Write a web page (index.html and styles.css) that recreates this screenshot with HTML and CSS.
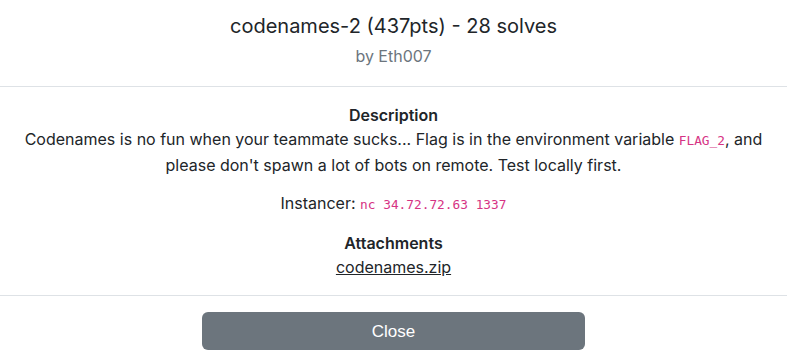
FILE: index.html
```html
<!DOCTYPE html>
<html lang="en">

<head>
    <meta charset="UTF-8">
    <meta name="viewport" content="width=device-width, initial-scale=1.0">
    <title>codenames-2</title>
    <link rel="stylesheet" href="styles.css">
</head>

<body>
    <div id="modal">
        <div id="modal-head">
            <h3 class="title">codenames-2 (437pts) - 28 solves</h3>
            <p class="author">by Eth007</p>
        </div>
        <div id="modal-body">
            <div class="block">
                <h6 class="label">Description</h6>
                <p>Codenames is no fun when your teammate sucks... Flag is in the environment variable <code>FLAG_2</code>, and
                    please don't spawn a lot of bots on remote. Test locally first.</p>
            </div>
            <div class="block">
                <p>Instancer: <code>nc 34.72.72.63 1337</code></p>
            </div>
            <div class="block">
                <h6 class="label">Attachments</h6>
                <a href="#">codenames.zip</a>
            </div>
        </div>
        <div id="modal-footer">
            <button class="btn-close">Close</button>
        </div>
    </div>
</body>

</html>
```

FILE: styles.css
```css
* {
    margin: 0;
    padding: 0;
    box-sizing: border-box;
}

body {
    font-family: Inter, "Noto Sans", sans-serif;
    font-size: 16px;
    line-height: 24px;
    color: #212529;
    background: #fff;
}

#modal {
    width: 787px;
}

#modal-head {
    text-align: center;
    padding: 12px 16px 18px;
    border-bottom: 1px solid #dee2e6;
}

.title {
    font-size: 20px;
    font-weight: 400;
    line-height: 28px;
}

.author {
    font-size: 16px;
    color: #6c757d;
    margin-top: 4px;
}

#modal-body {
    text-align: center;
    padding: 16px 16px 16px;
    border-bottom: 1px solid #dee2e6;
}

.block {
    margin-bottom: 14px;
}

.block:last-child {
    margin-bottom: 0;
}

.label {
    font-size: 16px;
    font-weight: 600;
}

code {
    font-family: "DejaVu Sans Mono", monospace;
    font-size: 12.8px;
    color: #d63384;
}

a {
    color: #212529;
}

#modal-footer {
    display: flex;
    justify-content: center;
    padding: 16px 0 10px;
}

.btn-close {
    width: 383px;
    height: 38px;
    border: none;
    border-radius: 6px;
    background: #6c757d;
    color: #fff;
    font-family: "Liberation Sans", Arial, sans-serif;
    font-size: 17px;
    padding-top: 2px;
}
```
